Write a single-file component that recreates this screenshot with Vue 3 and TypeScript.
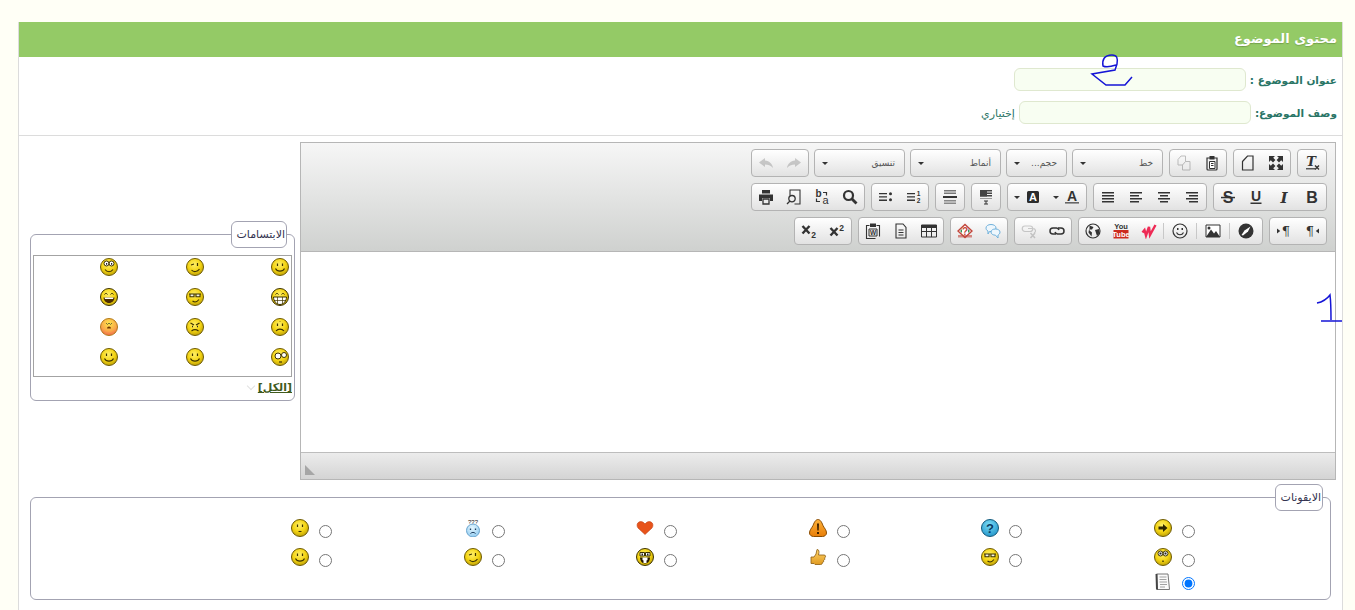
<script setup lang="ts">
import { h } from 'vue'

type Shape = {
  d?: string
  f?: string
  s?: string
  w?: number
  o?: number
  t?: string
  x?: number
  y?: number
  fs?: number
  fw?: string
  it?: boolean
  fam?: string
}

type Tool = { icon: string; off?: boolean; caret?: boolean; sep?: boolean }
type Group = { tools?: Tool[]; combo?: string; width?: number }

// small renderer so toolbar icons and smileys share the same shape list
const Glyph = (props: { shapes: Shape[]; size: number }) =>
  h(
    'svg',
    { width: props.size, height: props.size, viewBox: `0 0 ${props.size} ${props.size}`, direction: 'ltr' },
    props.shapes.map((p) =>
      p.t
        ? h(
            'text',
            {
              x: p.x,
              y: p.y,
              fill: p.f ?? '#333',
              'font-size': p.fs ?? 12,
              'font-weight': p.fw ?? 'normal',
              'font-style': p.it ? 'italic' : 'normal',
              'font-family': p.fam ?? '"DejaVu Serif", serif',
              'text-anchor': 'middle',
            },
            p.t,
          )
        : h('path', {
            d: p.d,
            fill: p.f ?? 'none',
            stroke: p.s ?? 'none',
            'stroke-width': p.w ?? 1,
            opacity: p.o ?? 1,
          }),
    ),
  )
Glyph.props = ['shapes', 'size']

const ink = '#333'
const sans = '"Liberation Sans", sans-serif'
const lines = (rows: [number, number, number][], f = ink): Shape[] => [
  { d: rows.map(([x, y, w]) => `M${x} ${y}h${w}v1.5h-${w}z`).join(''), f },
]

const icons: Record<string, Shape[]> = {
  clear: [
    { t: 'T', x: 7, y: 11, fs: 13, fw: 'bold', it: true },
    { d: 'M2 13.2h9v1.2H2z', f: ink },
    { d: 'M11 10.5l4 4M15 10.5l-4 4', s: ink, w: 1.4 },
  ],
  maximize: [
    { d: 'M1 1h6L5.2 2.8 7.4 5 5 7.4 2.8 5.2 1 7z', f: ink },
    { d: 'M15 1H9l1.8 1.8L8.6 5 11 7.4l2.2-2.2L15 7z', f: ink },
    { d: 'M1 15h6l-1.800-1.800 2.200-2.200L5 8.600l-2.200 2.200L1 9z', f: ink },
    { d: 'M15 15H9l1.800-1.800L8.600 11 11 8.600l2.200 2.200L15 9z', f: ink },
  ],
  newpage: [{ d: 'M2.500 6.500 7.500 1H13v14H2.500z', s: ink, w: 1.2 }],
  paste: [
    { d: 'M3 3h10v11a1 1 0 0 1-1 1H4a1 1 0 0 1-1-1z', s: ink, w: 1.2 },
    { d: 'M5.500 1h5v3.500h-5z', f: ink },
    { d: 'M5.500 6.500H11v7H5.500z', f: '#fff', s: ink },
    { d: 'M7 8.500h2.500M7 10.500h2.500', s: ink },
  ],
  copy: [
    { d: 'M2 4.500 5 1h4.500v9H2z', s: '#555' },
    { d: 'M6.500 10 9.500 6.500H14V15H6.500z', s: '#555', f: '#eee' },
  ],
  undo: [{ d: 'M7 3 1 7.500 7 12V9.500c3 0 5.500 .8 8 3.500-.5-4-3.500-7-8-7.500z', f: '#777' }],
  redo: [{ d: 'M9 3l6 4.500L9 12V9.500c-3 0-5.500 .8-8 3.500 .5-4 3.500-7 8-7.500z', f: '#777' }],
  bold: [{ t: 'B', x: 8, y: 14, fs: 16, fw: 'bold', fam: sans }],
  italic: [{ t: 'I', x: 8, y: 13.5, fs: 15, fw: 'bold', it: true }],
  underline: [
    { t: 'U', x: 8, y: 12, fs: 14, fw: 'bold', fam: sans },
    { d: 'M2.500 13.500h11V15h-11z', f: ink },
  ],
  strike: [
    { t: 'S', x: 8, y: 14, fs: 16, fw: 'bold', fam: sans },
    { d: 'M1 7.800h14v1.500H1z', f: ink },
  ],
  alignRight: lines([[2, 3, 12], [5, 6, 9], [2, 9, 12], [5, 12, 9]]),
  alignCenter: lines([[2, 3, 12], [4, 6, 8], [2, 9, 12], [4, 12, 8]]),
  alignLeft: lines([[2, 3, 12], [2, 6, 9], [2, 9, 12], [2, 12, 9]]),
  justify: lines([[2, 3, 12], [2, 6, 12], [2, 9, 12], [2, 12, 12]]),
  textColor: [
    { t: 'A', x: 8, y: 11.5, fs: 14, fw: 'bold', fam: sans },
    { d: 'M1 13h14v1.600H1z', f: '#666' },
  ],
  bgColor: [
    { d: 'M2 3.500A1.500 1.500 0 0 1 3.500 2h9A1.500 1.500 0 0 1 14 3.500v9a1.500 1.500 0 0 1-1.500 1.500h-9A1.500 1.500 0 0 1 2 12.500z', f: '#2c2c2c' },
    { t: 'A', x: 8, y: 12.2, fs: 11, fw: 'bold', f: '#fff', fam: sans },
  ],
  blocks: [
    ...lines([[2, 1, 12], [2, 3.5, 12], [2, 6, 12]], '#444'),
    { d: 'M2 1h7v6.500H2z', f: '#444' },
    { d: 'M2 9.500h12', s: '#999' },
    { d: 'M6 12h4M8 12v3M6 15h4', s: ink },
  ],
  hr: [
    ...lines([[2, 1, 12], [2, 3.5, 12]], '#777'),
    { d: 'M1 7h14v2H1z', f: '#333' },
    ...lines([[2, 11, 12], [2, 13.5, 12]], '#888'),
  ],
  bullets: [
    { d: 'M1 4h8v1.300H1zM1 7.300h8v1.300H1zM1 10.600h8v1.300H1z', f: ink },
    { d: 'M12.500 3.200a1.500 1.500 0 1 1 0 3 1.500 1.500 0 0 1 0-3zM12.500 9.300a1.500 1.500 0 1 1 0 3 1.500 1.500 0 0 1 0-3z', f: ink },
  ],
  numbers: [
    { d: 'M1 4h8v1.300H1zM1 7.300h8v1.300H1zM1 10.600h8v1.300H1z', f: ink },
    { t: '1', x: 12.5, y: 7, fs: 6.5, fw: 'bold', fam: sans },
    { t: '2', x: 12.5, y: 13.5, fs: 6.5, fw: 'bold', fam: sans },
  ],
  find: [
    { d: 'M6.500 2a4.500 4.500 0 1 1 0 9 4.500 4.500 0 0 1 0-9z', s: ink, w: 2.2 },
    { d: 'M10 10l4.500 4.500', s: ink, w: 2.8 },
  ],
  replace: [
    { t: 'b', x: 4.5, y: 7.5, fs: 10, fw: 'bold', fam: sans },
    { t: 'a', x: 11.5, y: 14.5, fs: 11, fam: sans },
    { d: 'M9 3.500h3.500V6.500M2.500 9.500v3H6', s: ink, w: 1.2 },
  ],
  preview: [
    { d: 'M4 6.500V1h10v14H8.500', s: ink, w: 1.1 },
    { d: 'M6 6.500a3.200 3.200 0 1 1 0 6.400 3.200 3.200 0 0 1 0-6.400zM3.700 12.200 1 15', s: ink, w: 1.3 },
  ],
  print: [
    { d: 'M4 1h8v3.500H4z', f: ink },
    { d: 'M1 5.500h14V12h-3V9H4v3H1z', f: ink },
    { d: 'M5 10h6v5H5z', s: ink, w: 1.3 },
  ],
  dirRtl: [
    { t: '¶', x: 6, y: 13, fs: 13 },
    { d: 'M15 5.500v5L11.800 8z', f: ink },
  ],
  dirLtr: [
    { t: '¶', x: 10, y: 13, fs: 13 },
    { d: 'M1 5.500v5L4.200 8z', f: ink },
  ],
  compass: [
    { d: 'M8 .5a7.500 7.500 0 1 1 0 15 7.500 7.500 0 0 1 0-15z', f: '#333' },
    { d: 'M12.500 3.500 10 8.500 5 12.500 3.500 12 6.500 7.500z', f: '#fff' },
  ],
  image: [
    { d: 'M1 2h14v12H1z', f: '#fff', s: ink },
    { d: 'M1 14 6 6.500l3 4 2-2.500 4 6z', f: ink },
    { d: 'M4 3.500a1.500 1.500 0 1 1 0 3 1.500 1.500 0 0 1 0-3z', f: ink },
  ],
  smiley: [
    { d: 'M8 1a7 7 0 1 1 0 14A7 7 0 0 1 8 1z', s: ink, w: 1.2 },
    { d: 'M5 5h1.500v2H5zM9.500 5H11v2H9.500z', f: ink },
    { d: 'M4.500 9.500c1.500 3 5.500 3 7 0', s: ink, w: 1.2 },
  ],
  wave: [{ d: 'M1.500 9.500 3.500 7 5 12.500 8 4 9 12 14.500 2', s: '#ee2a55', w: 2.4 }],
  youtube: [
    { t: 'You', x: 8, y: 6, fs: 7.5, fw: 'bold', fam: sans },
    { d: 'M.5 7h15v8.500H.5z', f: '#cc2a1e' },
    { t: 'Tube', x: 8, y: 14, fs: 7.5, fw: 'bold', f: '#fff', fam: sans },
  ],
  globe: [
    { d: 'M8 1a7 7 0 1 1 0 14A7 7 0 0 1 8 1z', s: ink, w: 1.2 },
    { d: 'M4.500 2.500 8.500 4 7 6.500H4L3.500 9.500 6.500 13.500 7 9.500 4.500 7.500zM10 7l4-1 .5 4-2.500 3z', f: ink },
  ],
  link: [
    { d: 'M9 5h3a3 3 0 0 1 0 6H8.500a3 3 0 0 1-2.500-2', s: ink, w: 1.5 },
    { d: 'M7 11H4a3 3 0 0 1 0-6h3.500A3 3 0 0 1 10 7', s: ink, w: 1.5 },
  ],
  unlink: [
    { d: 'M4 3h5a2.700 2.700 0 0 1 0 5.500H4A2.700 2.700 0 0 1 4 3zM7 5.500h5a2.500 2.500 0 0 1 1 4.800', s: '#777', w: 1.2 },
    { d: 'M9.500 10l4.500 5M14 10l-4.500 5', s: '#777', w: 1.5 },
  ],
  comment: [
    { d: 'M6 1.500c3 0 5 1.500 5 3.500s-2 3.500-5 3.500H4.500L3 11V8C1.500 7.500 1 6 1 5c0-2 2-3.500 5-3.500z', f: '#eef7fd', s: '#6fb1dc' },
    { d: 'M10.500 6c2.500 0 4.500 1.300 4.500 3s-1 2.600-2 3v3l-2.500-2.800c-2.500 0-4.500-1.300-4.500-3.200s2-3 4.500-3z', f: '#eef7fd', s: '#6fb1dc' },
  ],
  spoiler: [
    { d: 'M8 1.500 15 8 8 14.500 1 8z', s: '#c2453a', w: 1.5, f: '#fff' },
    { d: 'M1 12h14v2.500H1z', f: '#c2453a', o: 0.6 },
    { d: 'M3 8 5 6v4zM13 8l-2-2v4z', f: '#3f8f58' },
    { t: '?', x: 8, y: 12, fs: 10, fw: 'bold', f: '#c2453a', fam: sans },
  ],
  table: [
    { d: 'M.5 2h15v12H.5z', s: ink },
    { d: 'M.5 2h15v3H.5z', f: ink },
    { d: 'M.5 8.500h15M5.500 5v9M10.500 5v9', s: ink },
  ],
  doc: [
    { d: 'M3 1h7l3 3.500V15H3z', s: ink, w: 1.1 },
    { d: 'M5.500 7h5M5.500 9.500h5M5.500 12h5', s: ink },
  ],
  word: [
    { d: 'M4.500 2.500h-3v13h9M11.500 2.500h3v11', s: ink, w: 1.1 },
    { d: 'M5 .5h6V4H5z', f: ink },
    { d: 'M4 6h8v7H4z', s: ink },
    { t: 'W', x: 8, y: 12, fs: 6.5, fw: 'bold', fam: sans },
  ],
  sup: [
    { d: 'M1.500 5l7 7.500M8.500 5l-7 7.500', s: ink, w: 2.4 },
    { t: '2', x: 12.5, y: 7.5, fs: 8.5, fw: 'bold', fam: sans },
  ],
  sub: [
    { d: 'M1.500 3l7 7.500M8.500 3l-7 7.500', s: ink, w: 2.4 },
    { t: '2', x: 12.5, y: 15, fs: 8.5, fw: 'bold', fam: sans },
  ],
}

const t = (icon: string, extra: Partial<Tool> = {}): Tool => ({ icon, ...extra })

// every row reads from the right edge of the toolbar
const toolbar: Group[][] = [
  [
    { tools: [t('clear')] },
    { tools: [t('maximize'), t('newpage')] },
    { tools: [t('paste'), t('copy', { off: true })] },
    { combo: 'خط', width: 91 },
    { combo: 'حجم...', width: 61 },
    { combo: 'أنماط', width: 91 },
    { combo: 'تنسيق', width: 91 },
    { tools: [t('redo', { off: true }), t('undo', { off: true })] },
  ],
  [
    { tools: [t('bold'), t('italic'), t('underline'), t('strike')] },
    { tools: [t('alignRight'), t('alignCenter'), t('alignLeft'), t('justify')] },
    { tools: [t('textColor', { caret: true }), t('bgColor', { caret: true })] },
    { tools: [t('blocks')] },
    { tools: [t('hr')] },
    { tools: [t('numbers'), t('bullets')] },
    { tools: [t('find'), t('replace'), t('preview'), t('print')] },
  ],
  [
    { tools: [t('dirRtl'), t('dirLtr')] },
    {
      tools: [
        t('compass', { sep: true }),
        t('image', { sep: true }),
        t('smiley', { sep: true }),
        t('wave'),
        t('youtube'),
        t('globe'),
      ],
    },
    { tools: [t('link'), t('unlink', { off: true })] },
    { tools: [t('comment'), t('spoiler')] },
    { tools: [t('table'), t('doc'), t('word')] },
    { tools: [t('sup'), t('sub')] },
  ],
]

const ball = 'M9 .5a8.500 8.500 0 1 1 0 17 8.500 8.500 0 0 1 0-17z'
const brown = '#3d3200'
const base = (grad = 'gy', edge = '#6d5a05'): Shape => ({ d: ball, f: `url(#${grad})`, s: edge, w: 1 })
const eyes: Shape = { d: 'M6.500 5.500V8M11.500 5.500V8', s: brown, w: 1.2 }
const smile: Shape = { d: 'M4.500 10.500c1.500 3.500 7.500 3.500 9 0', s: brown, w: 1.1 }
const happyEyes: Shape = { d: 'M4.500 6.500c1-1.500 2-1.500 3 0M10.500 6.500c1-1.500 2-1.500 3 0', s: brown }
const glasses: Shape = {
  d: 'M3 6h12M4 6h4v2.800H4zM10 6h4v2.800h-4z',
  f: '#f4f4e4',
  s: brown,
  w: 1.1,
}
const bigEyes: Shape = {
  d: 'M6.500 3a2.500 2.500 0 1 1 0 5 2.500 2.500 0 0 1 0-5zM11.500 3a2.500 2.500 0 1 1 0 5 2.500 2.500 0 0 1 0-5z',
  f: '#fff',
  s: brown,
}
const dot: Shape = { d: 'M6 5h1.200v1.800H6zM11 5h1.200v1.800H11z', f: '#222' }

const faces: Record<string, Shape[]> = {
  smile: [base(), eyes, smile],
  wink: [
    base(),
    { d: 'M5 7l3-1M11.500 5v3', s: brown, w: 1.2 },
    { d: 'M5.500 12c2 2.500 6 2 8-1', s: brown, w: 1.1 },
  ],
  roll: [base(), bigEyes, dot, { d: 'M5 11.500c2 3 6 3 8 0', s: brown, w: 1.1 }],
  grin: [
    base('gy', brown),
    happyEyes,
    { d: 'M2.500 9h13c0 4-3 7.500-6.500 7.500S2.500 13 2.500 9z', f: '#fff', s: brown },
    { d: 'M6.500 9v7M11.500 9v7M3 12.500h12', s: brown, w: 0.7 },
  ],
  cool: [base(), glasses, { d: 'M6.500 13c2 1.500 4.500 1 6.500-1.500', s: brown, w: 1.1 }],
  laugh: [
    base('gy', brown),
    happyEyes,
    { d: 'M3.500 9.500h11c0 3-2.500 5.500-5.500 5.500s-5.500-2.500-5.500-5.500z', f: '#4a2c00' },
    { d: 'M4.500 9.500h9l-.5 1.500H5z', f: '#fff' },
  ],
  yell: [
    base('gy', brown),
    { d: 'M4 4.500h4.500V8H4zM9.500 4.500H14V8H9.500z', f: '#fff', s: brown },
    { d: 'M5.500 5.500H7v2H5.500zM11 5.500h1.500v2H11z', f: '#222' },
    { d: 'M4 9.500h10c0 3-2 6-5 6s-5-3-5-6z', f: '#221500' },
    { d: 'M6.500 9.500h5V12l-1 .5h-3l-1-.5zM7.500 12.500h3V15h-3z', f: '#fff' },
  ],
  sad: [
    base(),
    eyes,
    { d: 'M5 13c2-2.500 6-2.500 8 0', s: brown, w: 1.1 },
    { d: 'M9 3v1', s: '#9c8400' },
  ],
  angry: [
    base(),
    { d: 'M4.500 5 8 7M13.500 5 10 7', s: brown, w: 1.3 },
    { d: 'M6 8.500h1M11 8.500h1', s: '#222', w: 1.5 },
    { d: 'M5.500 13c2-1.500 5-1.500 7 0', s: brown, w: 1.1 },
  ],
  blush: [
    base('gr', '#b27a18'),
    { d: 'M6 5l1.500 1.500L9 5l1.500 1.500L12 5', s: '#553', w: 0.8 },
    { d: 'M7 10.500a2 2 0 1 1 4 0z', f: '#6d3500' },
  ],
  eek: [
    base(),
    bigEyes,
    { d: 'M5.500 4.500h2v2h-2zM10.500 4.500h2v2h-2z', f: '#222' },
    { d: 'M9 12.500V14', s: brown, w: 1.4 },
  ],
  shock: [
    base(),
    { d: 'M7 5a3 3 0 1 1 0 6 3 3 0 0 1 0-6zM13 4.500a2.500 2.500 0 1 1 0 5 2.500 2.500 0 0 1 0-5z', f: '#fff', s: brown },
    { d: 'M8 14h3', s: brown, w: 1.2 },
  ],
  neutral: [base(), eyes, { d: 'M7.500 12.500h3', s: brown, w: 1.1 }],
  arrow: [base(), { d: 'M4.500 7.500H9V5l4.500 4L9 13v-2.500H4.500z', f: '#2d2500' }],
  question: [
    base('gb', '#135a7c'),
    { t: '?', x: 9, y: 14, fs: 13, fw: 'bold', f: '#0a3c63', fam: sans },
  ],
  warning: [
    {
      d: 'M9 .5c2 0 3.500 2 5 6 1.500 3 3.500 4.500 3.500 7.500 0 2-2 3.500-4 3.500h-9c-2 0-4-1.500-4-3.500 0-3 2-4.500 3.500-7.500C5.500 2.500 7 .5 9 .5z',
      f: 'url(#go)',
      s: '#8a4c00',
    },
    { d: 'M8 4.500h2l-.3 7H8.300zM8 13h2v2H8z', f: '#3d2000' },
  ],
  heart: [
    {
      d: 'M9 15.500 2 9C.5 7 .8 4 3 3c2.500-1 4.500 0 6 2 1.500-2 3.500-3 6-2 2.200 1 2.500 4 1 6z',
      f: '#e8531a',
      s: '#c03d10',
      w: 0.6,
    },
  ],
  lost: [
    { d: 'M9 5a6.500 6.500 0 1 1 0 13A6.500 6.500 0 0 1 9 5z', f: 'url(#gi)', s: '#6aa5cf' },
    { t: '???', x: 9, y: 4.5, fs: 6, f: '#222', fam: sans },
    { d: 'M6.500 9.500V11M11.500 9.500V11', s: '#1f3f5f', w: 1.3 },
    { d: 'M6.500 14.500c1.500-1.500 3.500-1.500 5 0', s: '#1f3f5f' },
  ],
  thumb: [
    {
      d: 'M2 9h3l2-3 1-4.500c2 0 2.500 2 1.500 5.500H15c2 0 2 2 .5 3 .8 1.300 0 2-1 2.500.5 1.200-.2 2-1.200 2.200.2 1-.5 1.800-1.800 1.800H6l-1-1H2z',
      f: 'url(#gt)',
      s: '#8a5c10',
      w: 0.8,
    },
  ],
  paper: [
    { d: 'M2.500 1H14l1.500 15.500H3z', f: '#fafafa', s: '#777' },
    { d: 'M1.500 1h2l.5 15.500H2z', f: '#444' },
    { d: 'M5.500 4h7M5.500 6.500h7M5.500 9H13M6 11.500h7M6 14h5', s: '#8a8a8a', w: 0.8 },
  ],
}

const smileys = ['smile', 'wink', 'roll', 'grin', 'cool', 'laugh', 'sad', 'angry', 'blush', 'shock', 'smile', 'smile']

const topicIcons = [
  'arrow', 'question', 'warning', 'heart', 'lost', 'neutral',
  'eek', 'cool', 'thumb', 'yell', 'wink', 'smile',
]
</script>

<template>
  <div class="page" dir="rtl">
    <svg class="gradients" width="0" height="0" aria-hidden="true">
      <defs>
        <radialGradient id="gy" cx="45%" cy="35%" r="70%">
          <stop offset="0%" stop-color="#fff06a" />
          <stop offset="55%" stop-color="#f3d312" />
          <stop offset="100%" stop-color="#b79a05" />
        </radialGradient>
        <radialGradient id="gr" cx="50%" cy="30%" r="75%">
          <stop offset="0%" stop-color="#ffe74a" />
          <stop offset="60%" stop-color="#f9a84a" />
          <stop offset="100%" stop-color="#ef5a4a" />
        </radialGradient>
        <radialGradient id="gb" cx="45%" cy="30%" r="75%">
          <stop offset="0%" stop-color="#7bdcf6" />
          <stop offset="100%" stop-color="#1f93c9" />
        </radialGradient>
        <radialGradient id="gi" cx="45%" cy="30%" r="75%">
          <stop offset="0%" stop-color="#e4f6ff" />
          <stop offset="100%" stop-color="#8cc9ef" />
        </radialGradient>
        <linearGradient id="go" x1="0" y1="0" x2="0" y2="1">
          <stop offset="0%" stop-color="#fdb23a" />
          <stop offset="100%" stop-color="#e87e08" />
        </linearGradient>
        <linearGradient id="gt" x1="0" y1="0" x2="0" y2="1">
          <stop offset="0%" stop-color="#ffd46a" />
          <stop offset="100%" stop-color="#e09a20" />
        </linearGradient>
      </defs>
    </svg>

    <section class="panel">
      <h2 class="panel-title">محتوى الموضوع</h2>

      <div class="topic-form">
        <div class="form-row">
          <label class="form-label">عنوان الموضوع :</label>
          <input class="form-input" type="text" />
        </div>
        <div class="form-row">
          <label class="form-label">وصف الموضوع:</label>
          <input class="form-input" type="text" />
          <span class="form-hint">إختياري</span>
        </div>
      </div>

      <div class="compose">
        <div class="editor">
          <div class="toolbar">
            <div v-for="(row, r) in toolbar" :key="r" class="tool-row">
              <template v-for="(group, g) in row" :key="g">
                <div v-if="group.combo" class="combo" :style="{ width: group.width + 'px' }">
                  <span class="combo-label">{{ group.combo }}</span>
                  <span class="caret"></span>
                </div>
                <div v-else class="tool-group">
                  <span
                    v-for="tool in group.tools"
                    :key="tool.icon"
                    class="tool"
                    :class="{ off: tool.off, sep: tool.sep, 'has-caret': tool.caret }"
                  >
                    <Glyph :shapes="icons[tool.icon]" :size="16" />
                    <span v-if="tool.caret" class="caret"></span>
                  </span>
                </div>
              </template>
            </div>
          </div>
          <div class="editor-body"></div>
          <div class="editor-foot"><span class="resizer"></span></div>
        </div>

        <fieldset class="box smileys">
          <legend class="box-title">الابتسامات</legend>
          <div class="smiley-grid">
            <Glyph v-for="(name, i) in smileys" :key="i" :shapes="faces[name]" :size="18" />
          </div>
          <div class="smiley-more">
            <a class="more-link">[الكل]</a>
            <span class="more-arrow"></span>
          </div>
        </fieldset>
      </div>

      <fieldset class="box topic-icons">
        <legend class="box-title">الايقونات</legend>
        <div class="icon-grid">
          <label v-for="(name, i) in topicIcons" :key="i" class="icon-cell">
            <input type="radio" name="topic-icon" />
            <Glyph :shapes="faces[name]" :size="18" />
          </label>
          <label class="icon-cell last">
            <input type="radio" name="topic-icon" checked />
            <Glyph :shapes="faces.paper" :size="18" />
          </label>
        </div>
      </fieldset>
    </section>

    <!-- hand drawn marks on top of the screenshot -->
    <svg class="marks" width="1355" height="610" viewBox="0 0 1355 610">
      <path
        d="M1116 65c-6 2-11 2-13 1-1-6 1-11 9-11 5 0 6 3 5 9l-2 6-23 4 14 11h19l7-8"
        fill="none"
        stroke="#1414d6"
        stroke-width="1.5"
      />
      <path d="M1317 303c5-1 10-4 13-8 1 8 1 17 1 25M1321 321h21" fill="none" stroke="#1414d6" stroke-width="1.5" />
    </svg>
  </div>
</template>

<style>
html,
body {
  margin: 0;
  overflow: hidden;
  background: #fffff6;
}
</style>

<style scoped>
.page {
  box-sizing: border-box;
  width: 1355px;
  height: 610px;
  padding: 22px 12px 0 18px;
  overflow: hidden;
  font-family: "DejaVu Sans", sans-serif;
  font-size: 11px;
  color: #333;
}

.gradients {
  position: absolute;
}

.marks {
  position: absolute;
  top: 0;
  left: 0;
  pointer-events: none;
}

.panel {
  background: #fff;
  border: 1px solid #dcdcdc;
  border-top: 0;
  min-height: 600px;
}

.panel-title {
  margin: 0;
  height: 35px;
  padding-right: 5px;
  background: #94ca66;
  color: #fff;
  font-size: 13px;
  font-weight: bold;
  line-height: 34px;
  text-shadow: 0 1px 1px rgba(60, 90, 30, 0.35);
}

.topic-form {
  display: flex;
  flex-direction: column;
  gap: 10px;
  padding: 11px 5px 11px 0;
  border-bottom: 1px solid #dcdcdc;
}

.form-row {
  display: flex;
  align-items: center;
  gap: 4px;
}

.form-label {
  margin-top: 2px;
  color: #2a7566;
  font-size: 10.5px;
  font-weight: bold;
  line-height: 21px;
}

.form-input {
  box-sizing: border-box;
  width: 232px;
  height: 23px;
  margin: 0;
  background: #f8fef2;
  border: 1px solid #dfe8cf;
  border-radius: 6px;
  outline: none;
}

.form-hint {
  margin-top: 2px;
  color: #2a7566;
  font-size: 11px;
}

.compose {
  display: flex;
  align-items: flex-start;
  gap: 5px;
  padding: 6px 6px 0 11px;
}

.editor {
  flex: 1;
  display: flex;
  flex-direction: column;
  height: 338px;
  box-sizing: border-box;
  border: 1px solid #b6b6b6;
}

.toolbar {
  display: flex;
  flex-direction: column;
  gap: 6px;
  padding: 6px 8px;
  background: linear-gradient(#f6f6f6, #cfd1cf);
  border-bottom: 1px solid #b6b6b6;
}

.tool-row {
  display: flex;
  gap: 6px;
  height: 28px;
}

.tool-group,
.combo {
  box-sizing: border-box;
  height: 28px;
  border: 1px solid #b3b3b3;
  border-radius: 4px;
  background: linear-gradient(#fff, #e2e2e2);
}

.tool-group {
  display: flex;
}

/* combos sit a pixel closer together than the button groups */
.combo + * {
  margin-right: -1px;
}

.tool {
  position: relative;
  display: flex;
  align-items: center;
  justify-content: center;
  width: 28px;
  height: 26px;
}

.tool.off svg {
  opacity: 0.35;
}

.tool.sep {
  width: 33px;
}

.tool.sep::after {
  content: "";
  position: absolute;
  left: 0;
  top: 5px;
  bottom: 5px;
  border-left: 1px solid #c8c8c8;
}

.tool.has-caret {
  width: 39px;
  justify-content: flex-start;
  gap: 5px;
  padding-right: 6px;
  box-sizing: border-box;
}

.caret {
  width: 0;
  height: 0;
  border: 3px solid transparent;
  border-top: 3px solid #333;
  border-bottom: 0;
}

.combo {
  display: flex;
  align-items: center;
  justify-content: space-between;
  padding: 0 9px 0 7px;
}

.combo-label {
  color: #555;
  font-size: 9px;
}

.editor-body {
  flex: 1;
  background: #fff;
}

.editor-foot {
  position: relative;
  height: 26px;
  background: linear-gradient(#ececec, #d4d4d4);
  border-top: 1px solid #bdbdbd;
}

.resizer {
  position: absolute;
  left: 4px;
  bottom: 4px;
  width: 0;
  height: 0;
  border-right: 10px solid transparent;
  border-bottom: 10px solid #a6a6a6;
}

.box {
  box-sizing: border-box;
  min-width: 0;
  margin: 0;
  border: 1px solid #a3a3b2;
  border-radius: 6px;
}

.box-title {
  box-sizing: border-box;
  height: 27px;
  padding: 0 1px 0 5px;
  margin-right: 7px;
  background: #fff;
  border: 1px solid #a3a3b2;
  border-radius: 6px;
  color: #33334f;
  font-size: 11px;
  line-height: 25px;
}

.smileys {
  flex: none;
  width: 265px;
  height: 180px;
  margin-top: 79px;
  padding: 7px 0 0;
}

.smiley-grid {
  display: grid;
  grid-template-columns: repeat(3, 85.5px);
  grid-auto-rows: 30px;
  align-items: start;
  box-sizing: border-box;
  height: 122px;
  margin: 0 2px;
  padding: 2px 2px 0 0;
  border: 1px solid #a3a3a3;
}

.smiley-more {
  display: flex;
  align-items: center;
  gap: 4px;
  margin: 4px 2px 0;
}

.more-link {
  color: #3f5a1c;
  font-weight: bold;
  font-size: 11px;
  text-decoration: underline;
}

.more-arrow {
  width: 5px;
  height: 5px;
  margin-top: -4px;
  border-right: 1px solid #e0e0e0;
  border-bottom: 1px solid #e0e0e0;
  transform: rotate(45deg);
}

.topic-icons {
  height: 116px;
  margin: 4px 11px 0;
  padding: 6px 0 0;
}

.icon-grid {
  display: grid;
  grid-template-columns: repeat(6, 172.6px);
  grid-template-rows: 29px 29px 17px;
  margin-right: 135px;
}

.icon-cell {
  display: flex;
  align-items: center;
  gap: 10px;
}

.icon-cell input {
  flex: none;
  margin: 0;
}

.icon-cell svg {
  margin-bottom: 7px;
}

.icon-cell.last svg {
  margin-bottom: 3px;
}
</style>
